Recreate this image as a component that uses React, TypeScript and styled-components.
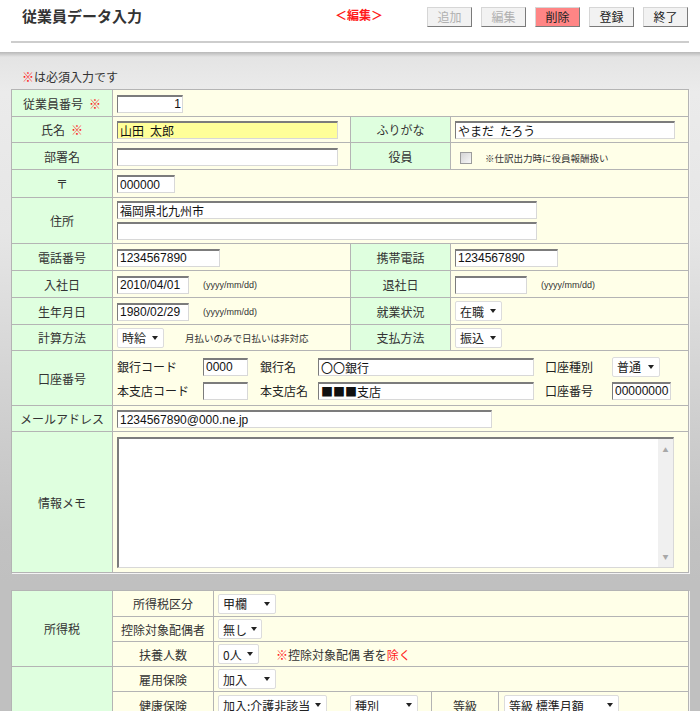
import React from "react";
import styled, { createGlobalStyle } from "styled-components";

const GlobalStyle = createGlobalStyle`
  html, body { margin: 0; padding: 0; }
  body {
    width: 700px;
    overflow: hidden;
    background: #c0c0c0;
    font-family: "Noto Sans CJK JP", "Noto Sans", sans-serif;
    font-size: 12px;
    color: #333;
  }
`;

const Header = styled.header`
  background: #fff;
  height: 52px;
  padding: 0 12px 0 11px;
  box-sizing: border-box;
`;

const TopBar = styled.div`
  display: flex;
  align-items: center;
  height: 19px;
  padding-top: 7px;
`;

const Title = styled.h1`
  flex: 0 0 313px;
  margin: -3px 0 0 11px;
  font-size: 15px;
  font-weight: bold;
  color: #333;
  line-height: 19px;
`;

const EditMark = styled.span`
  color: #ff1a1a;
  font-weight: bold;
  font-size: 12px;
  margin-top: -4px;
`;

const ButtonRow = styled.div`
  margin-left: auto;
  display: flex;
  gap: 9px;
`;

const Btn = styled.button<{ $danger?: boolean; $disabled?: boolean }>`
  box-sizing: border-box;
  width: 45px;
  height: 20px;
  padding: 0;
  font-family: "Noto Sans CJK JP", sans-serif;
  font-size: 12px;
  line-height: 18px;
  color: ${(p) => (p.$disabled ? "#b0b0b0" : "#222")};
  background: ${(p) => (p.$danger ? "#ff8585" : "#f2f2f2")};
  border: 1px solid;
  border-color: #d6d6d6 #7a7a7a #7a7a7a #d6d6d6;
  cursor: default;
`;

const Rule = styled.div`
  margin-top: 15px;
  border-top: 2px solid #cdcdcd;
  width: 678px;
`;

const Main = styled.main`
  background: linear-gradient(
    to bottom,
    #b8b8b8 0px,
    #e4e4e4 5px,
    #ebebeb 40px,
    #e6e6e6 180px,
    #d2d2d2 340px,
    #c2c2c2 480px,
    #c0c0c0 530px
  );
  padding: 17px 12px 0 11px;
`;

const RequiredNote = styled.p`
  margin: 0 0 4px 11px;
  font-size: 12px;
  line-height: 16px;
  color: #333;
`;

const Red = styled.span`
  color: #ff2020;
`;

const FormTable = styled.table`
  width: 677px;
  table-layout: fixed;
  border-collapse: collapse;
  border: 1px solid #a9a9a9;
  box-shadow: 1px 1px 0 #f4f4f4;
  & + & {
    margin-top: 17px;
  }
`;

const Row = styled.tr<{ $h?: number }>`
  height: ${(p) => p.$h ?? 27}px;
`;

const Label = styled.th`
  background: #dfffdf;
  border: 1px solid #b4b4b4;
  font-weight: normal;
  text-align: center;
  vertical-align: middle;
  color: #333;
  font-size: 12px;
  padding: 0;
`;

const SubLabel = styled(Label)`
  background: #ffffe8;
`;

const Value = styled.td`
  background: #ffffe8;
  border: 1px solid #b4b4b4;
  padding: 0 4px;
  text-align: left;
  vertical-align: middle;
  white-space: nowrap;
`;

const FlushValue = styled(Value)`
  padding: 0 0 0 4px;
`;

const TextBox = styled.input<{ $w: number; $hl?: boolean; $right?: boolean; $cjk?: boolean }>`
  box-sizing: border-box;
  width: ${(p) => p.$w}px;
  height: 18px;
  margin: 0;
  padding: 0 1px 0 2px;
  border: 1px solid #d8d8d8;
  border-top: 2px solid #7c7c7c;
  border-left: 1px solid #7c7c7c;
  background: ${(p) => (p.$hl ? "#ffff99" : "#fff")};
  font-family: ${(p) =>
    p.$cjk
      ? '"Noto Sans CJK JP", sans-serif'
      : '"Liberation Sans", "Noto Sans CJK JP", sans-serif'};
  font-size: 12px;
  color: #111;
  text-align: ${(p) => (p.$right ? "right" : "left")};
  vertical-align: middle;
  outline: none;
`;

const Select = styled.span<{ $w: number; $ml?: number }>`
  display: inline-flex;
  align-items: center;
  justify-content: space-between;
  box-sizing: border-box;
  width: ${(p) => p.$w}px;
  height: 20px;
  margin-left: ${(p) => p.$ml ?? 0}px;
  padding: 0 5px 0 4px;
  background: #fff;
  border: 1px solid #dcdcdc;
  border-radius: 2px;
  font-size: 12px;
  color: #222;
  vertical-align: middle;
  white-space: nowrap;
  &::after {
    content: "";
    flex: none;
    margin-left: 4px;
    border-left: 3.5px solid transparent;
    border-right: 3.5px solid transparent;
    border-top: 4px solid #222;
  }
`;

const Small = styled.span<{ $ml: number }>`
  display: inline-block;
  margin-left: ${(p) => p.$ml}px;
  font-size: 9.5px;
  color: #333;
  vertical-align: middle;
`;

const DateHint = styled(Small)`
  font-family: "Liberation Sans", sans-serif;
  font-size: 9px;
`;

const CheckBox = styled.span`
  display: inline-block;
  box-sizing: border-box;
  width: 12px;
  height: 12px;
  margin-left: 5px;
  border: 1px solid #9c9c9c;
  background: linear-gradient(135deg, #d4d4d4, #f8f8f8);
  vertical-align: middle;
`;

const Stack = styled.div`
  display: flex;
  flex-direction: column;
  gap: 3px;
`;

const BankGrid = styled.div`
  display: grid;
  grid-template-columns: 86px 57px 58px 227px 67px auto;
  row-gap: 5px;
  align-items: center;
  font-size: 12px;
  color: #222;
`;

const MemoBox = styled.div`
  display: flex;
  box-sizing: border-box;
  width: 557px;
  height: 131px;
  background: #fff;
  border: 1px solid #d8d8d8;
  border-top: 2px solid #7c7c7c;
  border-left: 2px solid #7c7c7c;
`;

const MemoArea = styled.textarea`
  flex: 1;
  border: 0;
  margin: 0;
  resize: none;
  outline: none;
  background: #fff;
`;

const ScrollTrack = styled.div`
  width: 15px;
  background: #f0f0f0;
  display: flex;
  flex-direction: column;
  justify-content: space-between;
  align-items: center;
  padding: 7px 0 6px;
  font-size: 6px;
  line-height: 8px;
  color: #a8a8a8;
`;

const InnerCell = styled.span`
  display: inline-flex;
  align-items: center;
  justify-content: center;
  align-self: stretch;
  width: 66px;
  margin-left: 13px;
  margin-right: 5px;
  border-left: 1px solid #b4b4b4;
  border-right: 1px solid #b4b4b4;
  font-size: 12px;
  color: #333;
`;

const InlineRow = styled.div`
  display: flex;
  align-items: center;
  height: 26px;
`;

const Warn = styled.span`
  margin-left: 17px;
  font-size: 12px;
  color: #333;
  vertical-align: middle;
`;

const Req = () => (
  <>
    {"\u2002"}
    <Red>※</Red>
  </>
);

export default function App() {
  return (
    <>
      <GlobalStyle />
      <Header>
        <TopBar>
          <Title>従業員データ入力</Title>
          <EditMark>＜編集＞</EditMark>
          <ButtonRow>
            <Btn $disabled>追加</Btn>
            <Btn $disabled>編集</Btn>
            <Btn $danger>削除</Btn>
            <Btn>登録</Btn>
            <Btn>終了</Btn>
          </ButtonRow>
        </TopBar>
        <Rule />
      </Header>

      <Main>
        <RequiredNote>
          <Red>※</Red>は必須入力です
        </RequiredNote>

        <FormTable>
          <colgroup>
            <col style={{ width: 101 }} />
            <col style={{ width: 238 }} />
            <col style={{ width: 100 }} />
            <col style={{ width: 238 }} />
          </colgroup>
          <tbody>
            <Row>
              <Label>
                従業員番号
                <Req />
              </Label>
              <Value colSpan={3}>
                <TextBox $w={66} $right readOnly value="1" />
              </Value>
            </Row>
            <Row $h={26}>
              <Label>
                氏名
                <Req />
              </Label>
              <Value>
                <TextBox $w={221} $hl readOnly value={"山田\u2002太郎"} />
              </Value>
              <Label>ふりがな</Label>
              <Value>
                <TextBox $w={220} readOnly value={"やまだ\u2002たろう"} />
              </Value>
            </Row>
            <Row>
              <Label>部署名</Label>
              <Value>
                <TextBox $w={221} readOnly value="" />
              </Value>
              <Label>役員</Label>
              <Value>
                <CheckBox />
                <Small $ml={13}>※仕訳出力時に役員報酬扱い</Small>
              </Value>
            </Row>
            <Row $h={28}>
              <Label>〒</Label>
              <Value colSpan={3}>
                <TextBox $w={58} readOnly value="000000" />
              </Value>
            </Row>
            <Row $h={46}>
              <Label>住所</Label>
              <Value colSpan={3}>
                <Stack>
                  <TextBox $w={420} readOnly value="福岡県北九州市" />
                  <TextBox $w={420} readOnly value="" />
                </Stack>
              </Value>
            </Row>
            <Row>
              <Label>電話番号</Label>
              <Value>
                <TextBox $w={103} readOnly value="1234567890" />
              </Value>
              <Label>携帯電話</Label>
              <Value>
                <TextBox $w={103} readOnly value="1234567890" />
              </Value>
            </Row>
            <Row>
              <Label>入社日</Label>
              <Value>
                <TextBox $w={72} readOnly value="2010/04/01" />
                <DateHint $ml={14}>(yyyy/mm/dd)</DateHint>
              </Value>
              <Label>退社日</Label>
              <Value>
                <TextBox $w={72} readOnly value="" />
                <DateHint $ml={14}>(yyyy/mm/dd)</DateHint>
              </Value>
            </Row>
            <Row>
              <Label>生年月日</Label>
              <Value>
                <TextBox $w={72} readOnly value="1980/02/29" />
                <DateHint $ml={14}>(yyyy/mm/dd)</DateHint>
              </Value>
              <Label>就業状況</Label>
              <Value>
                <Select $w={47}>在職</Select>
              </Value>
            </Row>
            <Row $h={26}>
              <Label>計算方法</Label>
              <Value>
                <Select $w={47}>時給</Select>
                <Small $ml={21}>月払いのみで日払いは非対応</Small>
              </Value>
              <Label>支払方法</Label>
              <Value>
                <Select $w={47}>振込</Select>
              </Value>
            </Row>
            <Row $h={55}>
              <Label>口座番号</Label>
              <Value colSpan={3}>
                <BankGrid>
                  <span>銀行コード</span>
                  <TextBox $w={45} readOnly value="0000" />
                  <span>銀行名</span>
                  <TextBox $w={216} $cjk readOnly value="〇〇銀行" />
                  <span>口座種別</span>
                  <Select $w={48}>普通</Select>
                  <span>本支店コード</span>
                  <TextBox $w={45} readOnly value="" />
                  <span>本支店名</span>
                  <TextBox $w={216} $cjk readOnly value="■■■支店" />
                  <span>口座番号</span>
                  <TextBox $w={59} readOnly value="00000000" />
                </BankGrid>
              </Value>
            </Row>
            <Row $h={26}>
              <Label>メールアドレス</Label>
              <Value colSpan={3}>
                <TextBox $w={375} readOnly value="1234567890@000.ne.jp" />
              </Value>
            </Row>
            <Row $h={141}>
              <Label>情報メモ</Label>
              <Value colSpan={3}>
                <MemoBox>
                  <MemoArea readOnly value="" />
                  <ScrollTrack>
                    <span>▲</span>
                    <span>▼</span>
                  </ScrollTrack>
                </MemoBox>
              </Value>
            </Row>
          </tbody>
        </FormTable>

        <FormTable>
          <colgroup>
            <col style={{ width: 101 }} />
            <col style={{ width: 101 }} />
            <col style={{ width: 475 }} />
          </colgroup>
          <tbody>
            <Row $h={26}>
              <Label rowSpan={3}>所得税</Label>
              <SubLabel>所得税区分</SubLabel>
              <Value>
                <Select $w={58}>甲欄</Select>
              </Value>
            </Row>
            <Row $h={25}>
              <SubLabel>控除対象配偶者</SubLabel>
              <Value>
                <Select $w={44}>無し</Select>
              </Value>
            </Row>
            <Row $h={25}>
              <SubLabel>扶養人数</SubLabel>
              <Value>
                <Select $w={41}>0人</Select>
                <Warn>
                  <Red>※</Red>控除対象配偶 者を<Red>除く</Red>
                </Warn>
              </Value>
            </Row>
            <Row $h={25}>
              <Label rowSpan={4}>社会保険</Label>
              <SubLabel>雇用保険</SubLabel>
              <Value>
                <Select $w={58}>加入</Select>
              </Value>
            </Row>
            <Row $h={26}>
              <SubLabel>健康保険</SubLabel>
              <FlushValue>
                <InlineRow>
                  <Select $w={109}>加入:介護非該当</Select>
                  <Select $w={68} $ml={23}>種別</Select>
                  <InnerCell>等級</InnerCell>
                  <Select $w={115}>等級 標準月額</Select>
                </InlineRow>
              </FlushValue>
            </Row>
            <Row $h={26}>
              <SubLabel>厚生年金</SubLabel>
              <Value>
                <Select $w={58}>加入</Select>
              </Value>
            </Row>
            <Row $h={26}>
              <SubLabel>労災保険</SubLabel>
              <Value>
                <Select $w={58}>加入</Select>
              </Value>
            </Row>
          </tbody>
        </FormTable>
      </Main>
    </>
  );
}
